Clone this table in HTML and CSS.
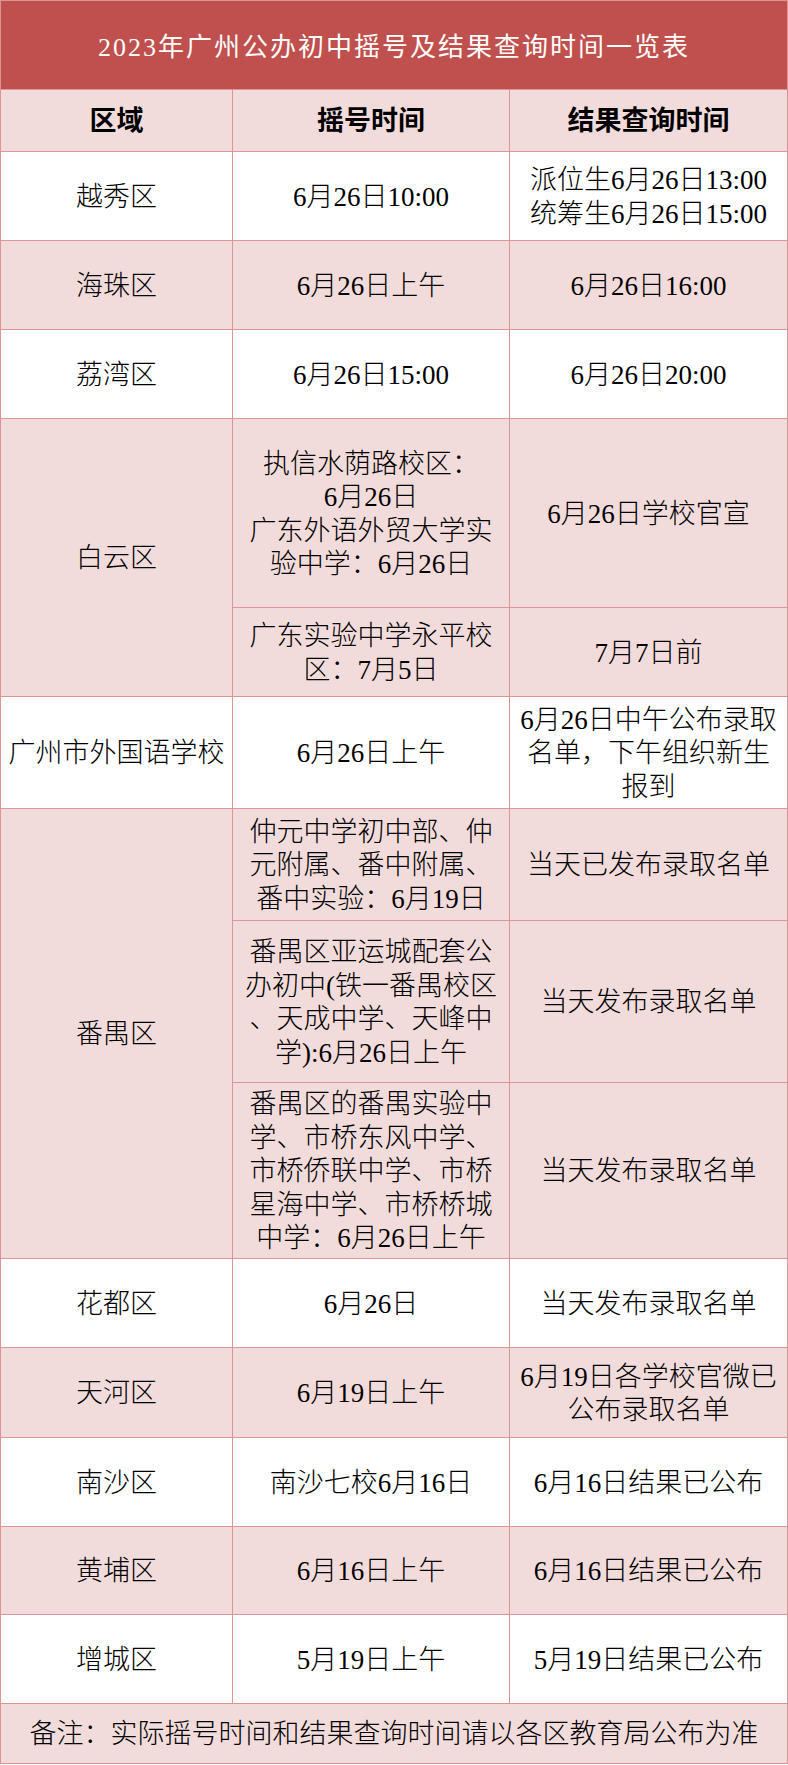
FILE: index.html
```html
<!DOCTYPE html>
<html lang="zh-CN">
<head>
<meta charset="utf-8">
<title>2023年广州公办初中摇号及结果查询时间一览表</title>
<link rel="stylesheet" href="styles.css">
</head>
<body>
<div class="sheet">
  <div class="cell title wide">2023年广州公办初中摇号及结果查询时间一览表</div>

  <div class="cell head">区域</div>
  <div class="cell head">摇号时间</div>
  <div class="cell head">结果查询时间</div>

  <div class="cell">越秀区</div>
  <div class="cell">6月26日10:00</div>
  <div class="cell">派位生6月26日13:00<br>统筹生6月26日15:00</div>

  <div class="cell pink">海珠区</div>
  <div class="cell pink">6月26日上午</div>
  <div class="cell pink">6月26日16:00</div>

  <div class="cell">荔湾区</div>
  <div class="cell">6月26日15:00</div>
  <div class="cell">6月26日20:00</div>

  <div class="cell pink span2">白云区</div>
  <div class="cell pink">执信水荫路校区：<br>6月26日<br>广东外语外贸大学实<br>验中学：6月26日</div>
  <div class="cell pink">6月26日学校官宣</div>
  <div class="cell pink">广东实验中学永平校<br>区：7月5日</div>
  <div class="cell pink">7月7日前</div>

  <div class="cell">广州市外国语学校</div>
  <div class="cell">6月26日上午</div>
  <div class="cell">6月26日中午公布录取<br>名单，下午组织新生<br>报到</div>

  <div class="cell pink span3">番禺区</div>
  <div class="cell pink">仲元中学初中部、仲<br>元附属、番中附属、<br>番中实验：6月19日</div>
  <div class="cell pink">当天已发布录取名单</div>
  <div class="cell pink">番禺区亚运城配套公<br>办初中(铁一番禺校区<br>、天成中学、天峰中<br>学):6月26日上午</div>
  <div class="cell pink">当天发布录取名单</div>
  <div class="cell pink">番禺区的番禺实验中<br>学、市桥东风中学、<br>市桥侨联中学、市桥<br>星海中学、市桥桥城<br>中学：6月26日上午</div>
  <div class="cell pink">当天发布录取名单</div>

  <div class="cell">花都区</div>
  <div class="cell">6月26日</div>
  <div class="cell">当天发布录取名单</div>

  <div class="cell pink">天河区</div>
  <div class="cell pink">6月19日上午</div>
  <div class="cell pink">6月19日各学校官微已<br>公布录取名单</div>

  <div class="cell">南沙区</div>
  <div class="cell">南沙七校6月16日</div>
  <div class="cell">6月16日结果已公布</div>

  <div class="cell pink">黄埔区</div>
  <div class="cell pink">6月16日上午</div>
  <div class="cell pink">6月16日结果已公布</div>

  <div class="cell">增城区</div>
  <div class="cell">5月19日上午</div>
  <div class="cell">5月19日结果已公布</div>

  <div class="cell pink wide">备注：实际摇号时间和结果查询时间请以各区教育局公布为准</div>
</div>
</body>
</html>
```

FILE: styles.css
```css
html, body {
  margin: 0;
  padding: 0;
  background: #ffffff;
}

body {
  width: 788px;
  font-family: "Liberation Serif", "Noto Sans CJK SC", serif;
  color: #000000;
}

.sheet {
  display: grid;
  grid-template-columns: 231px 276px 277px;
  grid-template-rows: 88px 61px 88px 88px 88px 188px 88px 111px 111px 161px 175px 88px 89px 88px 87px 88px 59px;
  gap: 1px;
  padding: 1px;
  background: #d99694;
  width: 786px;
}

.cell {
  display: flex;
  align-items: center;
  justify-content: center;
  text-align: center;
  background: #ffffff;
  font-size: 27px;
  font-weight: 300;
  line-height: 33.5px;
  padding-top: 3px;
  box-sizing: border-box;
  white-space: nowrap;
}

.pink {
  background: #f2dcdb;
}

.head {
  background: #f2dcdb;
  font-weight: 700;
}

.title {
  background: #c0504d;
  color: #ffffff;
  font-size: 26px;
  font-weight: 400;
  letter-spacing: 2px;
  padding-top: 6px;
}

.wide {
  grid-column: 1 / -1;
}

.span2 {
  grid-row: span 2;
}

.span3 {
  grid-row: span 3;
}
```
